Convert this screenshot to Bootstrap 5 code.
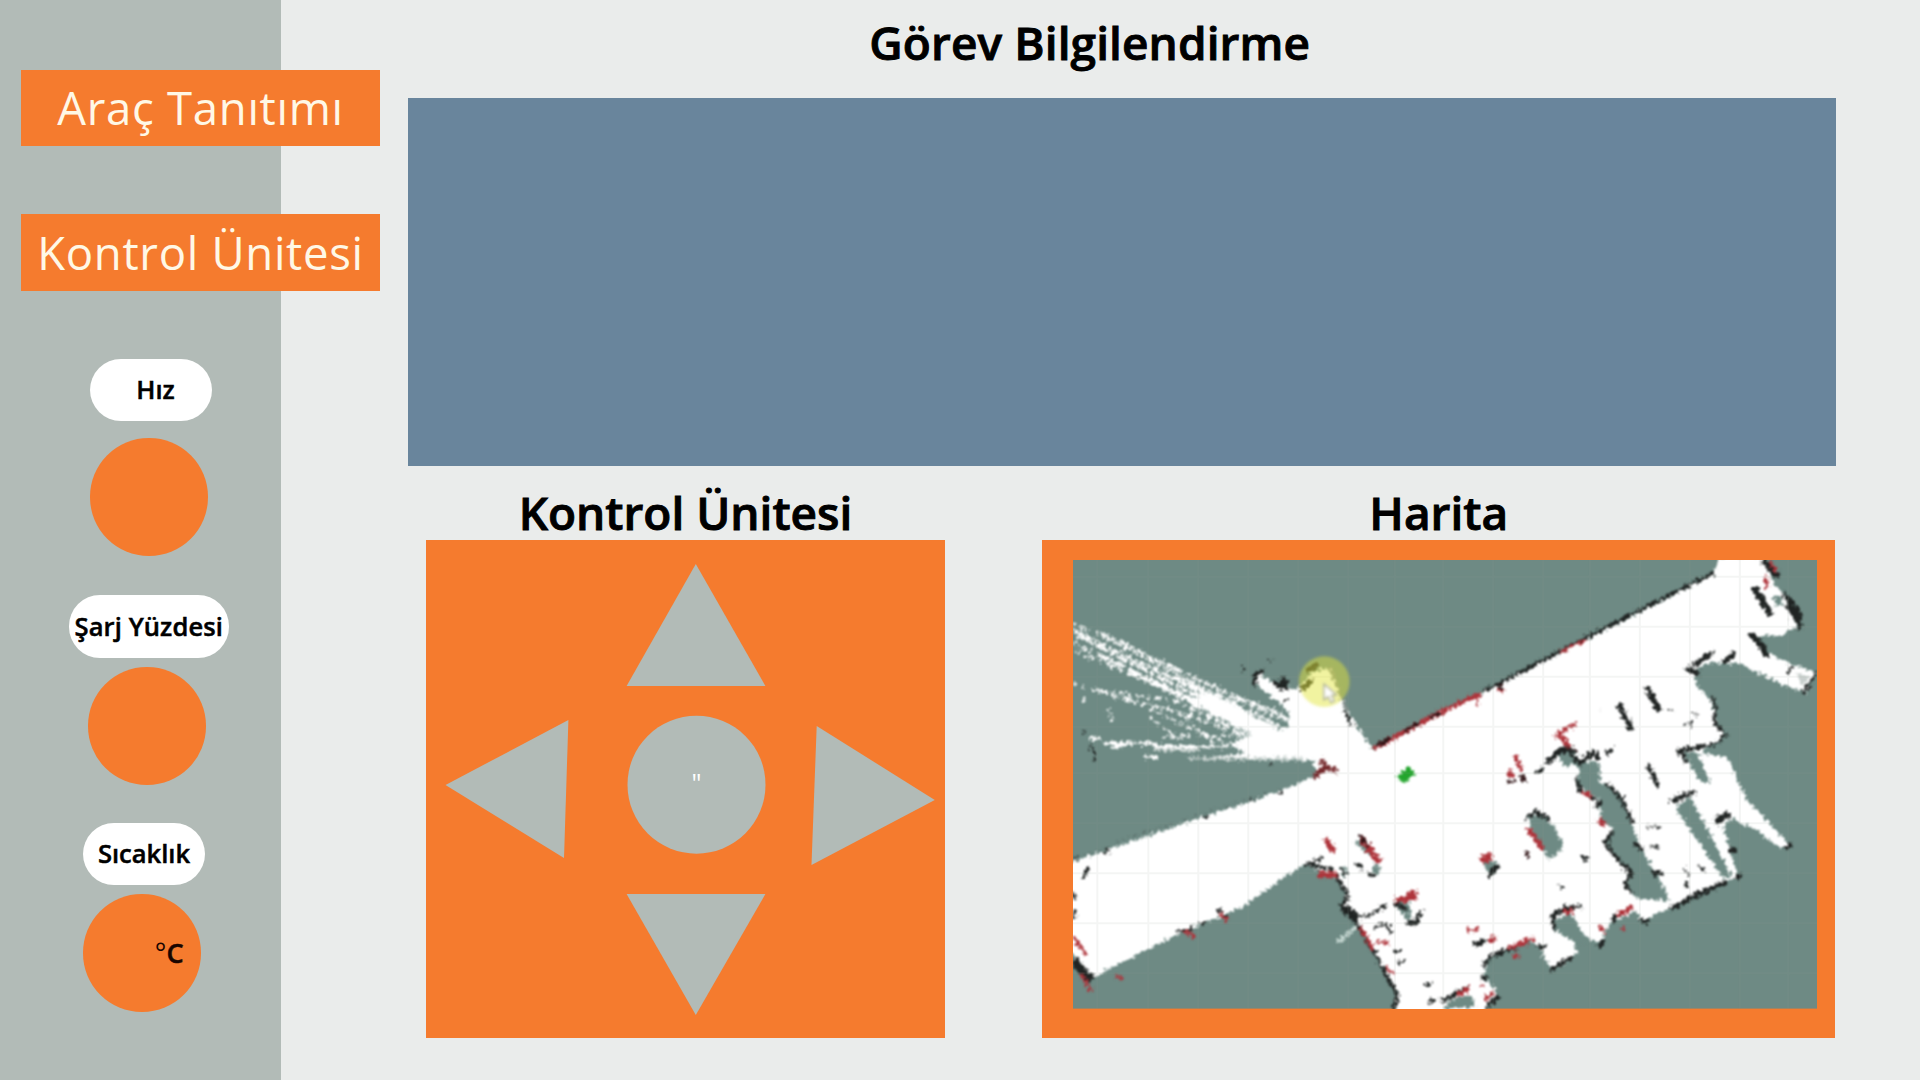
<!DOCTYPE html>
<html lang="tr">
<head>
<meta charset="utf-8">
<meta name="viewport" content="width=device-width, initial-scale=1">
<title>Görev Bilgilendirme</title>
<link rel="stylesheet" href="https://cdn.jsdelivr.net/npm/bootstrap@5.3.0/dist/css/bootstrap.min.css">
<style>
  :root { --orange:#f57b2e; --sage:#b2bbb7; --paper:#eaeceb; --steel:#69859c; }
  body { font-family:"Open Sans","Noto Sans",sans-serif; background:var(--paper); color:#000; }
  .screen { width:1920px; height:1080px; }
  .side { width:280.7px; background:var(--sage); padding-top:70px; }
  .nav-tile { width:359px; height:76px; margin-left:21px; background:var(--orange); color:#fff8e6; font-size:45.5px; font-weight:400; letter-spacing:.7px; line-height:1; white-space:nowrap; position:relative; }
  .nav-tile + .nav-tile { margin-top:68px; height:77px; }
  .gauge-label { height:62.5px; width:122px; border-radius:31px; background:#fff; font-size:25.5px; font-weight:600; -webkit-text-stroke:.5px #000; padding-bottom:1px; white-space:nowrap; }
  .gauge-dial { width:117.5px; height:117.5px; background:var(--orange); font-size:27px; font-weight:600; color:#180500; }
  .g-speed { margin:67.5px 0 0 90px; }
  .g-speed .gauge-label { padding-left:9px; }
  .g-speed .gauge-dial { margin-top:17px; }
  .g-charge { margin:39.5px 0 0 68.5px; }
  .g-charge .gauge-label { width:160.5px; letter-spacing:.1px; }
  .g-charge .gauge-dial { margin:9.5px 0 0 19.5px; }
  .g-temp { margin:38px 0 0 83px; }
  .g-temp .gauge-dial { margin-top:9px; padding-right:17px; }
  .deg { font-weight:400; }
  .unit { -webkit-text-stroke:.5px #180500; }
  .board { padding-left:127.3px; padding-right:84.5px; }
  .heading { font-size:46px; font-weight:600; -webkit-text-stroke:.9px #000; line-height:60px; margin:0; white-space:nowrap; }
  .h-mission { height:98px; padding:11.5px 64px 0 0; letter-spacing:.1px; }
  .h-panel { height:74px; padding-top:16px; }
  .info { height:368px; background:var(--steel); }
  .pad-col { width:519px; margin-left:18px; }
  .map-col { width:793.5px; margin-left:97px; }
  .panel-box { height:498px; background:var(--orange); }
  .map-box { padding:20px 18px 29.4px 31px; }
</style>
</head>
<body>
<div class="screen d-flex overflow-hidden">
  <aside class="side flex-shrink-0">
    <nav class="d-flex flex-column">
      <a class="nav-tile d-flex align-items-center justify-content-center text-decoration-none" href="#">Araç Tanıtımı</a>
      <a class="nav-tile d-flex align-items-center justify-content-center text-decoration-none" href="#">Kontrol Ünitesi</a>
    </nav>
    <section class="g-speed">
      <div class="gauge-label d-flex align-items-center justify-content-center">Hız</div>
      <div class="gauge-dial rounded-circle"></div>
    </section>
    <section class="g-charge">
      <div class="gauge-label d-flex align-items-center justify-content-center">Şarj Yüzdesi</div>
      <div class="gauge-dial rounded-circle"></div>
    </section>
    <section class="g-temp">
      <div class="gauge-label d-flex align-items-center justify-content-center">Sıcaklık</div>
      <div class="gauge-dial rounded-circle d-flex align-items-center justify-content-end"><span class="deg">°</span><span class="unit">C</span></div>
    </section>
  </aside>

  <main class="board flex-grow-1">
    <h1 class="heading h-mission text-center">Görev Bilgilendirme</h1>
    <div class="info"></div>
    <div class="d-flex">
      <section class="pad-col">
        <h2 class="heading h-panel text-center">Kontrol Ünitesi</h2>
        <div class="panel-box">
          <svg class="d-block" width="519" height="498" viewBox="426 540 519 498" fill="#b2bbb7">
            <path d="M695.8 564L765.4 686H626.6Z"/>
            <path d="M626.6 894H765.4L695.8 1015Z"/>
            <path d="M445.5 785L568.4 720L564 858Z"/>
            <path d="M816.7 726L934.8 800L811.5 865Z"/>
            <circle cx="696.5" cy="784.7" r="69"/>
            <text x="696.5" y="792" text-anchor="middle" font-size="25" font-weight="400" fill="#fff">"</text>
          </svg>
        </div>
      </section>
      <section class="map-col">
        <h2 class="heading h-panel text-center">Harita</h2>
        <div class="panel-box map-box">
          <svg class="d-block" width="744.5" height="448.6" viewBox="99 240 2234 1346" preserveAspectRatio="none">
            <defs>
              <filter id="rough" x="0" y="0" width="100%" height="100%" color-interpolation-filters="sRGB">
                <feTurbulence type="fractalNoise" baseFrequency=".1" numOctaves="2" seed="4" result="n"/>
                <feDisplacementMap in="SourceGraphic" in2="n" scale="28" xChannelSelector="R" yChannelSelector="G"/>
                <feGaussianBlur stdDeviation="3"/>
              </filter>
              <filter id="soft" x="0" y="0" width="100%" height="100%"><feGaussianBlur stdDeviation="4"/></filter>
            </defs>
            <rect x="99" y="240" width="2234" height="1346" fill="#6e8a84"/>
            <g filter="url(#rough)">
              <rect x="60" y="200" width="2300" height="1420" fill="none"/>
              <!-- range-finder rays -->
              <g stroke="#fff" fill="none" stroke-width="8">
                <path d="M99 430L800 745" stroke-dasharray="8 14 20 9 5 18"/>
                <path d="M180 455L560 640L790 730" stroke-dasharray="30 8 14 10"/>
                <path d="M99 450L760 770" stroke-dasharray="22 8 9 5" stroke-width="10"/>
                <path d="M200 475L720 740" stroke-dasharray="12 8 30 7" />
                <path d="M110 465L700 765" stroke-dasharray="40 6 12 9" stroke-width="10"/>
                <path d="M99 490L650 745" stroke-dasharray="9 14 24 6"/>
                <path d="M180 525L620 740" stroke-dasharray="50 5 30 9" stroke-width="10"/>
                <path d="M270 575L640 755" stroke-dasharray="60 4" stroke-width="12"/>
                <path d="M300 545L600 690" stroke-dasharray="18 8 10 5" stroke-width="11"/>
                <path d="M400 590L620 700" stroke-dasharray="22 6 10 5" stroke-width="14"/>
                <path d="M110 515L330 605L650 770" stroke-dasharray="10 16 34 9"/>
                <path d="M99 610L250 655L600 740" stroke-dasharray="8 20 5 30 20 14"/>
                <path d="M180 635L400 660L640 775" stroke-dasharray="22 10 9 14" stroke-width="10"/>
                <path d="M220 650L390 690L610 765" stroke-dasharray="12 18 18 9"/>
                <path d="M330 690L560 790M200 690L220 720M330 710L420 780M420 700L520 790M370 770L640 765" stroke-dasharray="9 12 15 14"/>
                <path d="M125 660h12M145 775h35M190 790h160M220 800h25M310 832h45M340 800h220" stroke-width="10"/>
                <path d="M570 655L720 690M630 680L740 720M650 700L720 740" stroke-dasharray="9 12 15 8"/>
              </g>
              <path fill="#fff" d="M450 632L520 655L600 680L650 715L720 748L745 740L748 705L730 680L640 605L655 580L700 605L770 630L820 575L870 565L895 640L950 735L1000 812L1210 700L2020 285L2040 230H2175L2200 310L2240 350L2265 400L2272 440L2225 465L2150 470L2180 515L2240 545L2330 580L2300 638L2230 615L2150 575L2085 545L2060 555L2020 545L1960 570L1970 620L2010 655L2030 720L2050 770L2000 800L1985 820L2060 830L2090 890L2120 960L2170 1010L2250 1095L2220 1105L2150 1050L2070 1015L2050 1040L2095 1190L2060 1205L1890 1285L1810 1320L1785 1295L1710 1330L1680 1385L1640 1370L1590 1300L1545 1320L1550 1355L1600 1380L1610 1420L1590 1445L1540 1470L1515 1440L1505 1400L1470 1385L1410 1405L1350 1430L1330 1490L1365 1530L1370 1560L1320 1600H1065L1075 1540L1040 1490L1000 1420L960 1340L910 1290L915 1240L890 1200L825 1165L800 1150L740 1185L610 1280L420 1360L240 1450L160 1495L80 1400V1150L200 1110L490 1010L630 965L830 890L820 842L440 838L620 820L560 790L640 765L560 720L500 690Z"/>
              <path fill="#c7d1ce" d="M440 832H790V840H440ZM340 804H480V814H340Z"/>
              <!-- unexplored pockets -->
              <g fill="#6e8a84">
                <path d="M1600 840L1680 850V905L1740 940L1770 1010L1800 1100L1830 1150L1870 1220L1890 1262L1790 1255L1760 1215L1780 1180L1740 1140L1700 1090L1720 1045L1680 1020L1680 960L1610 910L1620 880Z"/>
                <path d="M1930 815L1970 815L2015 915L1975 895ZM1905 985L1950 950L2020 1080L2075 1190L2050 1195L1960 1060Z"/>
                <path d="M1465 1015L1500 1005L1545 1040L1570 1100L1530 1140L1490 1080ZM1325 1140L1375 1150L1370 1175L1350 1190Z"/>
                <path d="M1310 1580L1210 1590L1230 1560L1290 1545ZM940 1085L965 1080L1000 1130L980 1120ZM1055 1265L1110 1270V1325ZM1550 820L1600 800L1620 850L1570 860ZM1590 1300L1650 1385L1610 1390L1550 1355L1545 1320Z"/>
                <path d="M2200 350l25 -5 5 25 -20 10ZM1000 1150l20 10 -5 25 -20 -5ZM900 1165l20 -5 5 25 -15 8Z"/>
              </g>
              <path fill="#fff" d="M1590 1298L1640 1305L1660 1345L1655 1385L1630 1360Z"/>
              <!-- walls -->
              <g stroke="#202423" fill="none" stroke-width="11">
                <path d="M1330 635L1780 400L2020 280" stroke-width="10"/>
                <path d="M2170 240L2215 290" stroke-width="20"/><path d="M2230 340L2275 395L2280 450" stroke-width="14"/><path d="M2245 370L2275 420" stroke-width="22"/>
                <path d="M2140 320L2195 405" stroke-width="20"/><path d="M2130 460L2170 500L2180 530" stroke-width="18"/>
                <path d="M1935 568L1980 580M1955 560L2020 515M2050 548L2085 520" stroke-width="14"/>
                <path d="M1820 620L1860 695M1735 670L1775 750" stroke-width="17"/>
                <path d="M2015 650L2030 690L2020 720L2055 765L2030 790L1990 800M2240 580L2260 560M2330 580L2290 640" stroke-width="9"/>
                <path d="M1915 810L1940 845M1910 812L1990 800M1695 820L1720 808M1825 855L1855 920" stroke-width="12"/>
                <path d="M1890 965L1965 935" stroke-width="14"/><path d="M2025 1025L2070 1000" stroke-width="20"/>
                <path d="M1890 1288L1960 1250L2060 1205M2065 1108l25 5M2085 1190h20M2235 1105L2255 1095" stroke-width="14"/>
                <path d="M1490 880L1510 865M1520 850L1550 820L1580 805L1620 850L1660 815L1675 840" stroke-width="14"/>
                <path d="M1700 910L1745 955L1780 1030M1605 890L1620 930L1680 970L1665 985M1720 1050L1695 1090L1735 1140L1775 1180L1755 1210L1775 1240" stroke-width="11"/>
                <path d="M1455 1015L1490 995L1530 1020M1330 1460L1350 1430L1430 1400M1490 1400H1520M1530 1470L1600 1430M1545 1350L1535 1310L1570 1285L1625 1280" stroke-width="12"/>
                <path d="M1205 1565L1250 1540L1280 1525M1325 1492H1345M1340 1580L1375 1550M1300 1395L1340 1380M1715 1325L1740 1300M1800 1320L1825 1325M1675 1400L1690 1385M1627 1135h20M1560 1220h12M1780 1090L1810 1110M1835 1180L1870 1180M1935 1215h10" stroke-width="14"/>
                <path d="M1060 1590L1075 1545L1040 1490L1010 1430L975 1370L950 1330L905 1280L925 1250L895 1200L870 1165L805 1155L850 1130" stroke-width="10"/>
                <path d="M915 1285L955 1320" stroke-width="28"/><path d="M960 1308H985L1045 1270" stroke-width="8"/><path d="M1000 1345L1040 1330L1050 1360M1060 1415h20M1070 1447h25M1155 1515h20M1165 1562h18"/>
                <path d="M960 1075L985 1100M905 1170L920 1185M950 1150L970 1165M985 1180L1000 1195M1100 1325L1125 1330L1145 1290M1065 1270L1100 1290M1345 1190L1375 1155" stroke-width="12"/>
                <path d="M640 618L650 580L675 575M700 608L725 620L740 600M730 590L740 630M780 630L820 600M800 575L835 550" stroke-width="14"/>
                <path d="M870 560L935 735" stroke="#84908d" stroke-width="10"/><path d="M915 695L935 740M610 568h8M690 543h8M735 660h8M690 855h8M125 750l10 8M150 795l12 25M160 835h8" stroke-width="8"/>
                <path d="M99 1440L155 1500" stroke-width="24"/><path d="M99 1240l10 20M102 1290v25M145 1165L130 1195M190 1120L210 1108M410 1355L460 1345M480 1330h15M530 1285L560 1315M720 930l5 15M630 955l5 8M490 1010h18M99 1135h10" stroke-width="9"/>
                <path d="M99 1135L200 1105M230 1087L400 1030M430 1020L700 935" stroke="#4b5856" stroke-width="3" stroke-dasharray="5 12"/>
                <path d="M1930 735h10M1960 700l15 5M1950 720l5 20M1680 690h1M1890 690h10M1820 1040h40M1830 1100h30M1930 1165l20 20M1980 1160l20 20" stroke-width="5"/>
              </g>
              <!-- live scan returns -->
              <g stroke="#ae343b" fill="none" stroke-width="10">
                <path d="M1000 806L1205 695L1325 640" stroke-width="15"/><path d="M1310 675L1315 650M1375 625L1395 635M1560 515L1640 480" stroke-width="9"/>
                <path d="M820 890L860 860L840 838M850 860L890 870" stroke="#762b2e" stroke-width="16"/>
                <path d="M2190 245L2210 275M2180 290L2180 325M1545 770L1590 740L1610 735M1560 765L1590 805M1425 825L1445 870" stroke-width="12"/>
                <path d="M1405 885L1420 880" stroke-width="24"/>
                <path d="M1625 935L1655 950M1675 1020L1695 1035M1465 1045L1510 1110" stroke-width="15"/>
                <path d="M1325 1145L1345 1130L1355 1140" stroke-width="22"/>
                <path d="M855 1075L880 1115M965 1075L1020 1150" stroke-width="18"/><path d="M835 1185H890" stroke-width="20"/>
                <path d="M1065 1260L1095 1260L1130 1235M1100 1245L1130 1255" stroke-width="17"/>
                <path d="M960 1340L1000 1410M1035 1460L1060 1480M1010 1385L1045 1390M99 1370L140 1425M120 1480L155 1530M435 1350L465 1375M540 1300L565 1325M230 1485l15 15" />
                <path d="M1250 1545L1290 1525M1345 1383L1370 1375M1410 1405L1480 1375M1420 1425L1440 1430M1570 1295L1600 1295M1675 1345L1695 1350M1730 1307L1780 1280M1335 1555L1360 1540M1280 1350h12M1745 1345h10" stroke-width="14"/>
                <path d="M1295 1355L1315 1345M1320 1515L1330 1520"/>
              </g>
              <path d="M1010 797L1050 776M1090 755L1140 728M1170 713L1200 697M1375 610L1385 625M960 1065L985 1100M1455 1115L1470 1130M1440 885L1455 905M1400 905L1425 905M1590 800L1610 815" stroke="#301517" stroke-width="9" fill="none"/>
              <path d="M895 1385L950 1340M890 1380h20" stroke="#c9dad5" stroke-width="10"/>
              <path d="M1070 890L1105 858L1125 880L1095 910Z" fill="#23a52d"/>
              <path d="M2270 580L2310 590L2285 620ZM2060 850l15 40" fill="#c8cfcd"/>
            </g>
            <path d="M172 240V1586M325 240V1586M475 240V1586M625 240V1586M775 240V1586M925 240V1586M1065 240V1586M1210 240V1586M1360 240V1586M1510 240V1586M1650 240V1586M1800 240V1586M1950 240V1586M2100 240V1586M2245 240V1586M99 290H2333M99 440H2333M99 590H2333M99 740H2333M99 880H2333M99 1030H2333M99 1180H2333M99 1330H2333M99 1480H2333" stroke="#8f9b98" stroke-opacity=".1" stroke-width="6"/>
            <!-- cursor highlight -->
            <g filter="url(#soft)">
              <rect x="99" y="240" width="2234" height="1346" fill="none"/>
              <circle cx="853" cy="605" r="76" fill="#e2e53a" fill-opacity=".48"/>
              <path d="M852 612V660L865 650L873 668L883 663L875 646L890 645Z" fill="#fff" stroke="#a6a97e" stroke-width="4"/>
            </g>
          </svg>
        </div>
      </section>
    </div>
  </main>
</div>
<script src="https://cdn.jsdelivr.net/npm/bootstrap@5.3.0/dist/js/bootstrap.bundle.min.js"></script>
</body>
</html>
